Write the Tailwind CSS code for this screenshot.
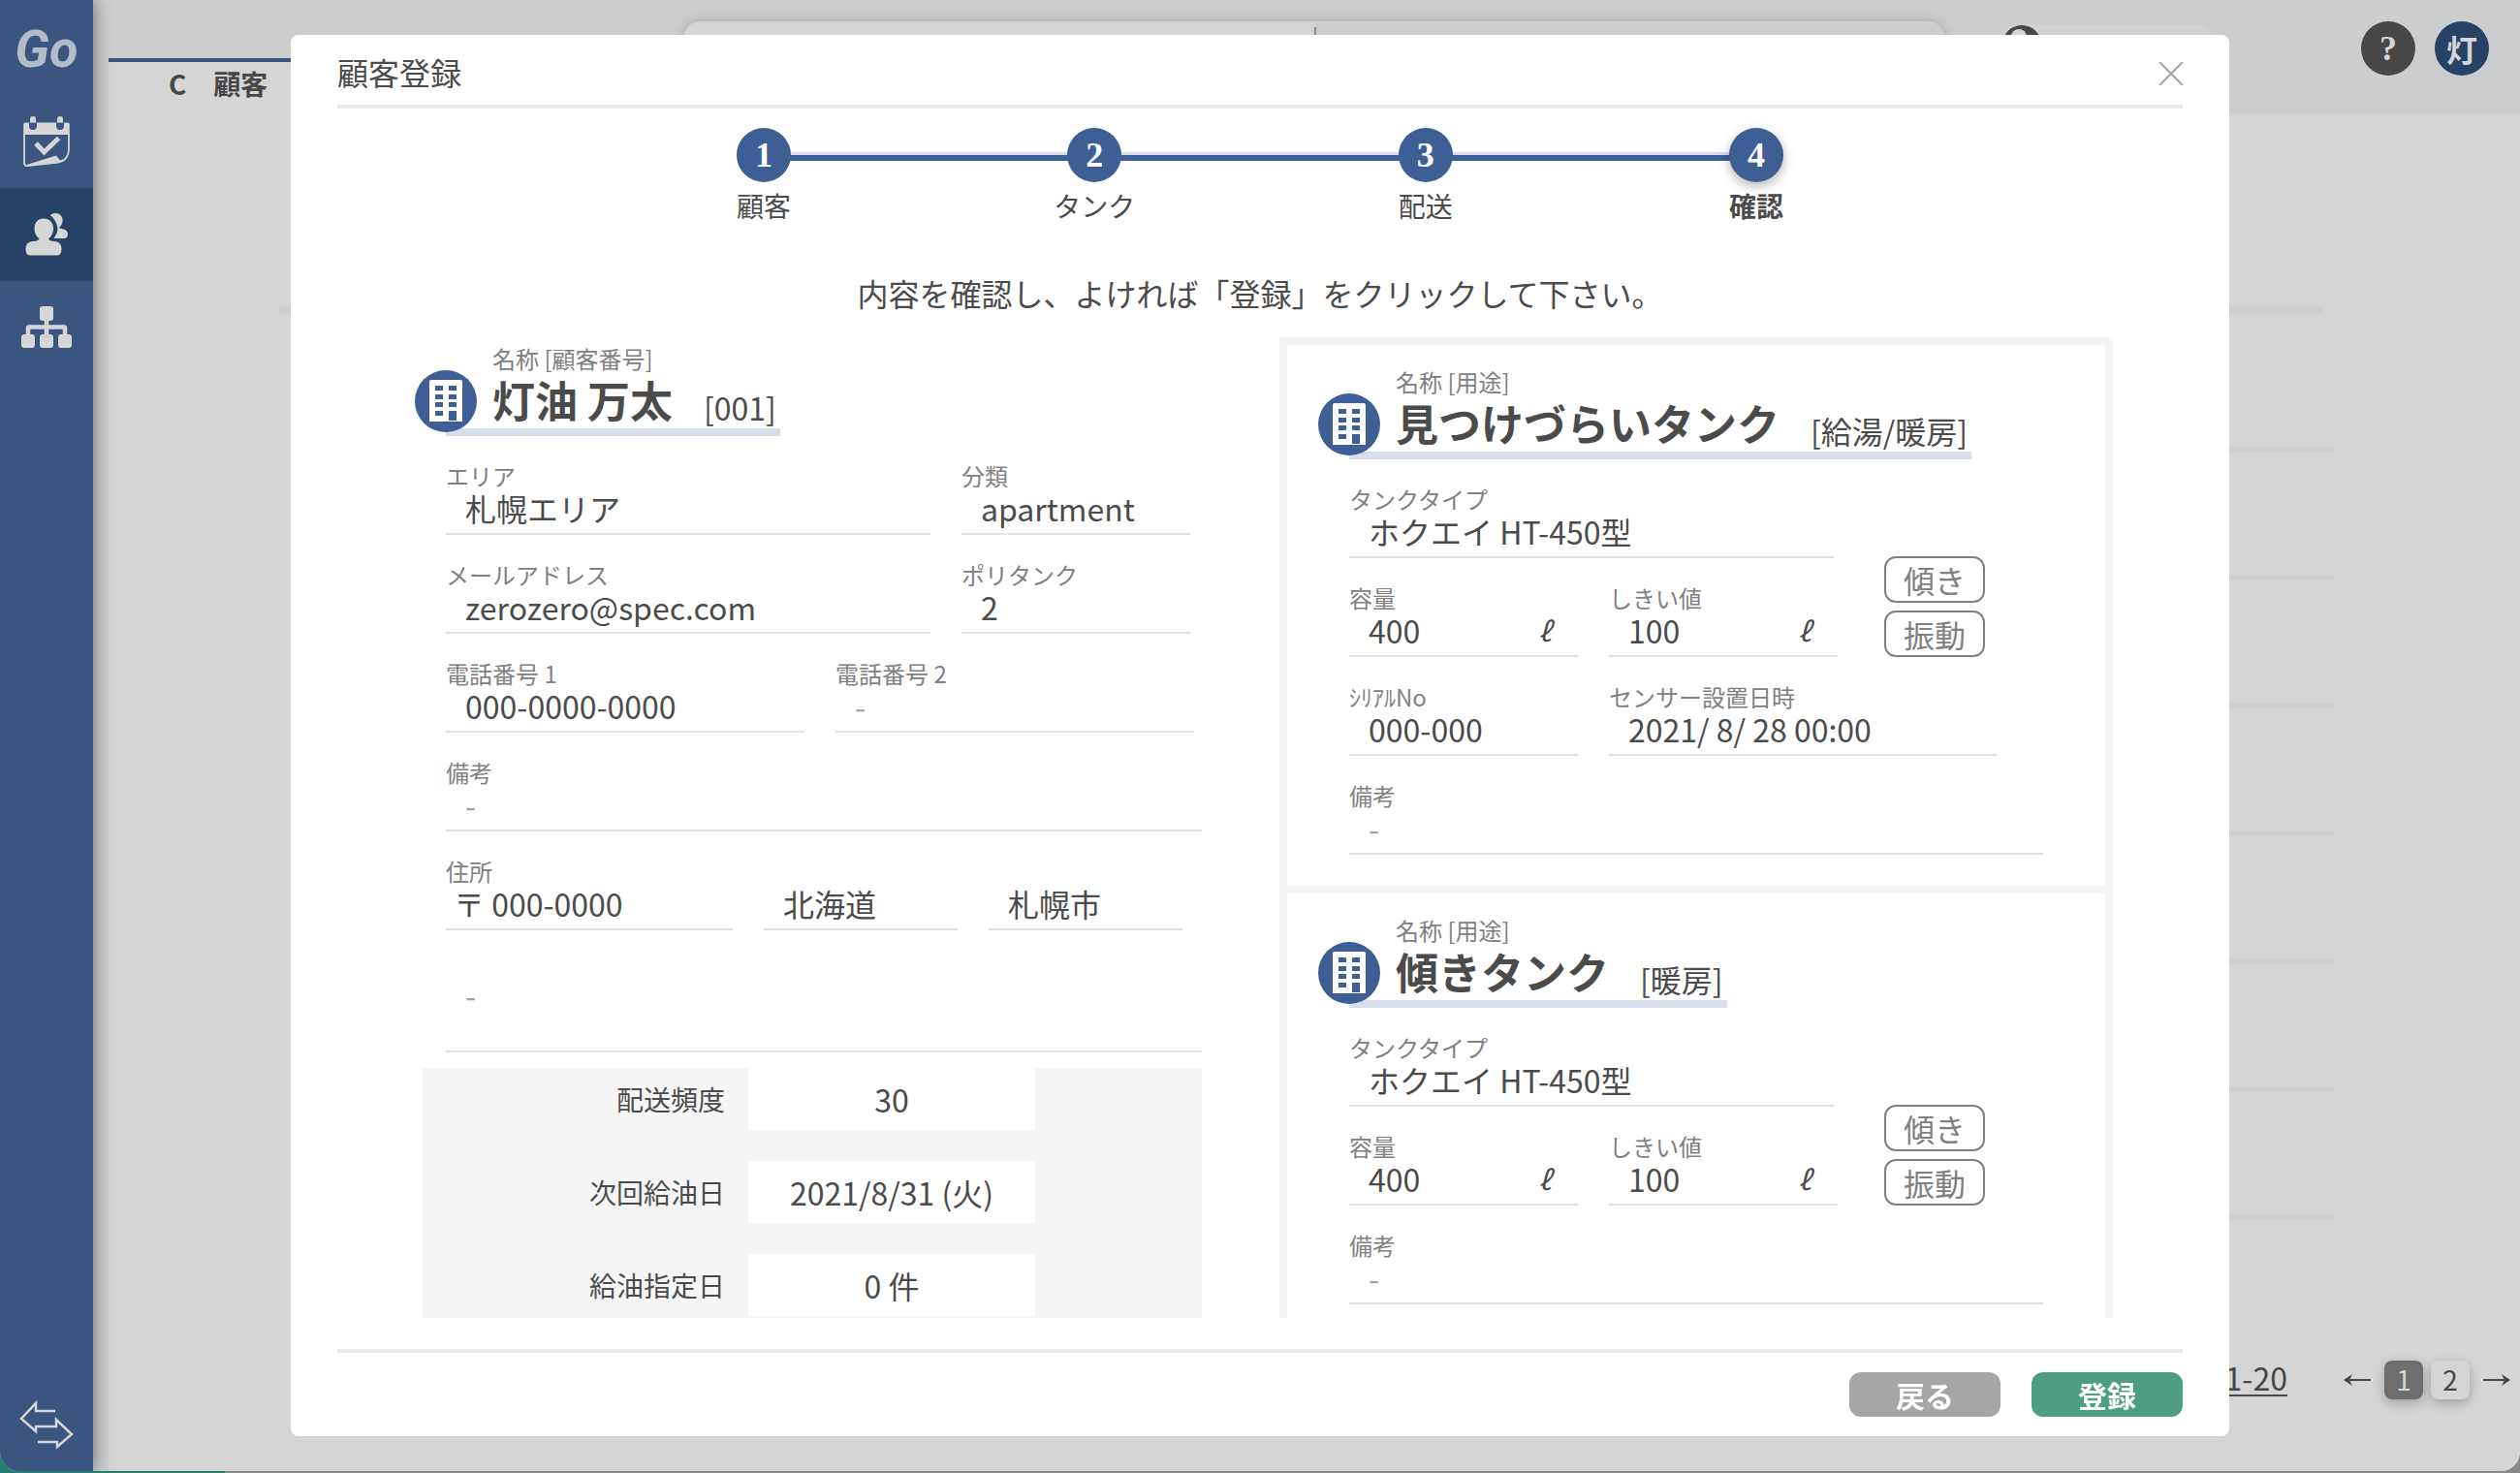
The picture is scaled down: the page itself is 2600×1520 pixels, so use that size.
<!DOCTYPE html>
<html lang="ja">
<head>
<meta charset="utf-8">
<meta name="viewport" content="width=device-width, initial-scale=1">
<title>顧客登録</title>
<script src="https://cdn.jsdelivr.net/npm/@tailwindcss/browser@4"></script>
</head>
<body class="font-['Noto_Sans_CJK_JP',sans-serif] text-[#4b4b4b]">

<svg class="hidden" aria-hidden="true">
  <symbol id="building" viewBox="0 0 64 64">
    <circle cx="32" cy="32" r="32" fill="#3d5f96"/>
    <path d="M17 10h30a2 2 0 0 1 2 2v41H15V12a2 2 0 0 1 2-2z" fill="#fff"/>
    <path d="M21 16h8v5h-8zM35 16h8v5h-8zM21 25h8v5h-8zM35 25h8v5h-8zM21 33h8v5h-8zM35 33h8v5h-8zM21 42h8v5h-8zM35 42h8v10h-8z" fill="#3d5f96"/>
  </symbol>
</svg>

<div class="h-screen bg-[linear-gradient(90deg,#26806f_232px,#8a8a8a_232px)] pb-0.5">
  <div class="flex h-full overflow-hidden rounded-b-[20px] bg-[#cccdcf]">

    <!-- Sidebar -->
    <nav class="relative z-10 flex w-24 shrink-0 flex-col bg-[#3a557f] text-[#d6d6d6] shadow-[2px_0_16px_rgba(0,0,0,0.4)]">
      <a href="#" class="flex h-[98px] items-center justify-center pt-1 font-['Liberation_Sans_Narrow',Roboto,sans-serif] text-[54px] leading-none font-bold text-[#b3bcc9] italic">Go</a>
      <a href="#" aria-label="カレンダー" class="flex h-24 items-center justify-center">
        <svg class="size-14" viewBox="20 118 56 56">
          <path d="M26 126.500h44a1.800 1.800 0 0 1 1.800 1.800V139H24.200v-10.500a2 2 0 0 1 1.800-2z" fill="currentColor"/>
          <path d="M25 138v30.500a2.500 2.500 0 0 0 3 2.500l32-3.500c7-1 11-7 11-13V138" fill="none" stroke="currentColor" stroke-width="1.800"/>
          <path d="M29 169.500l29-9 4 5 5-2-7 4.500-32 3.500z" fill="currentColor"/>
          <path d="M30 126.500h8v3.500a4 4 0 0 1-8 0zM58 126.500h8v3.500a4 4 0 0 1-8 0z" fill="#3a557f"/>
          <path d="M31 126.500V123a3 3 0 0 1 6 0v3.500zM59 126.500V123a3 3 0 0 1 6 0v3.500z" fill="currentColor"/>
          <path d="M37 148l8.500 9 15-14.500" fill="none" stroke="currentColor" stroke-width="5"/>
        </svg>
      </a>
      <a href="#" aria-label="顧客" aria-current="page" class="flex h-24 items-center justify-center bg-[#264266]">
        <svg class="size-14" viewBox="20 214 56 56">
          <path d="M52 222c3-3 9-3 11.500 1.500S64 232 61 235c1 1.500 9 .5 9 6.500 0 3-1.500 4.500-4 4.500H55.500c1-2 2-3 3-5 2-5 1-12-6.500-19z" fill="currentColor"/>
          <path d="M45 225c6 0 10.500 4.500 10.500 11 0 4.500-2 8-5 10.500.5 2 4 1.500 8 2.500 3.500 1 5.500 4 5.500 7.500 0 4-1.500 7.500-5 7.500H31c-3.500 0-5-3.500-5-7.500 0-3.500 2-6.500 5.500-7.500 4-1 8-.5 8.500-2.500-3-2.500-5-6-5-10.500 0-6.500 4-11 10-11z" fill="currentColor" stroke="#264266" stroke-width="1"/>
        </svg>
      </a>
      <a href="#" aria-label="組織" class="flex h-24 items-center justify-center">
        <svg class="size-14" viewBox="20 310 56 56" fill="currentColor">
          <rect x="41" y="316" width="14" height="15" rx="3"/>
          <rect x="22" y="345" width="14" height="14" rx="3"/>
          <rect x="41" y="345" width="14" height="14" rx="3"/>
          <rect x="60" y="345" width="14" height="14" rx="3"/>
          <path d="M48 330v17M29 347v-8.500q0-1 1-1h36q1 0 1 1v8.500" fill="none" stroke="currentColor" stroke-width="4.500"/>
        </svg>
      </a>
      <button type="button" aria-label="切り替え" class="mt-auto mb-5 flex justify-center">
        <svg class="size-14" viewBox="0 0 56 56" fill="none" stroke="currentColor" stroke-width="2.500">
          <path d="M37 14H17V6L2 22l15 13v-5h21v-7l16 15-15 13v-5H19"/>
        </svg>
      </button>
    </nav>

    <!-- Customer list behind the dialog -->
    <main class="relative ml-4 flex min-w-0 flex-1 flex-col bg-[#d5d5d5]">
      <header class="flex h-[118px] shrink-0 items-start bg-[#cccdcf] pt-[22px] pr-8 pl-[594px]">
        <form class="flex h-14 flex-1 overflow-hidden rounded-2xl bg-[#cecece] shadow-[0_0_12px_rgba(0,0,0,0.2)]">
          <input type="text" aria-label="検索" class="mt-0.5 w-1/2 bg-[#d5d5d5]">
          <span class="mt-1.5 w-0.5 bg-[#8c8c8c]"></span>
        </form>
        <button type="button" aria-label="ユーザー検索" class="mt-1 ml-[60px] flex h-12 w-[216px] rounded-xl bg-[#d2d2d2]">
          <svg class="size-10" viewBox="0 0 40 40"><circle cx="20" cy="20" r="20" fill="#474747"/><circle cx="17" cy="12" r="8" fill="#d5d5d5"/></svg>
        </button>
        <div class="ml-[154px] flex gap-5">
          <button type="button" class="size-14 rounded-full bg-[#474747] font-['Liberation_Serif',serif] text-[36px] leading-[56px] font-bold text-[#d6d6d6]">?</button>
          <button type="button" class="size-14 rounded-full bg-[#264266] text-[32px] leading-[54px] font-bold text-[#d6d6d6]">灯</button>
        </div>
      </header>
      <a href="#" class="absolute top-[60px] left-0 w-[400px] border-t-4 border-[#3a557f] bg-[#d5d5d5] pb-4 pl-[62px] text-[28px] leading-[45px] font-bold text-[#474747]">C　顧客</a>
      <div class="mt-[194px] mr-[204px] ml-44 h-4 rounded-lg bg-linear-to-b from-[#d4d4d4] via-[#cccccc] to-[#d4d4d4]"></div>
      <div class="mr-48 ml-56 flex flex-col gap-32 pt-[134px]">
        <div class="h-1 bg-[#cecece]"></div>
        <div class="h-1 bg-[#cecece]"></div>
        <div class="h-1 bg-[#cecece]"></div>
        <div class="h-1 bg-[#cecece]"></div>
        <div class="h-1 bg-[#cecece]"></div>
        <div class="h-1 bg-[#cecece]"></div>
        <div class="h-1 bg-[#cecece]"></div>
      </div>
      <div class="mt-auto mb-[74px] flex items-center justify-end gap-2 pr-2 text-[#474747]">
        <a href="#" class="mr-12 border-b-2 border-[#474747] pb-1 text-[32px] leading-[28px]">1-20</a>
        <a href="#" aria-label="前へ" class="mr-1"><svg class="h-6 w-8" viewBox="0 0 32 24"><path d="M30 12H4" stroke="currentColor" stroke-width="2"/><path d="M2 12l9-6-3 6 3 6z" fill="currentColor"/></svg></a>
        <a href="#" class="size-10 rounded-lg bg-[#6e6e6e] text-center text-[28px] leading-[38px] text-[#d5d5d5] shadow-[0_4px_12px_rgba(0,0,0,0.25)]">1</a>
        <a href="#" class="size-10 rounded-lg bg-[#d5d5d5] text-center text-[28px] leading-[38px] shadow-[0_4px_12px_rgba(0,0,0,0.25)]">2</a>
        <a href="#" aria-label="次へ" class="ml-1"><svg class="h-6 w-8" viewBox="0 0 32 24"><path d="M2 12h26" stroke="currentColor" stroke-width="2"/><path d="M30 12l-9-6 3 6-3 6z" fill="currentColor"/></svg></a>
      </div>
    </main>
  </div>
</div>

<!-- Registration dialog -->
<div class="fixed inset-0 z-20 px-[300px] pt-9 pb-[38px]">
  <section role="dialog" aria-labelledby="dialog-title" class="flex h-full flex-col rounded-lg bg-white px-12">
    <header class="flex h-[76px] shrink-0 items-center justify-between border-b-4 border-[#ebebeb] pt-2">
      <h1 id="dialog-title" class="pb-1 text-[32px] leading-10">顧客登録</h1>
      <button type="button" aria-label="閉じる" class="text-[#a3a3a3]">
        <svg class="size-6" viewBox="0 0 24 24" fill="none" stroke="currentColor" stroke-width="2"><path d="M0 0l24 24M24 0L0 24"/></svg>
      </button>
    </header>

    <ol class="relative mx-auto mt-5 flex w-[1080px] shrink-0 justify-between text-[28px] leading-8">
      <li class="absolute inset-x-7 top-[25px] h-[9px] border-t-[3px] border-[#d7dee9] bg-[#3d5f96]" aria-hidden="true"></li>
      <li class="relative flex w-14 flex-col items-center gap-2 whitespace-nowrap"><span class="size-14 rounded-full bg-[#3d5f96] text-center font-['Liberation_Serif',serif] text-[36px] leading-[56px] font-bold text-white">1</span>顧客</li>
      <li class="relative flex w-14 flex-col items-center gap-2 whitespace-nowrap"><span class="size-14 rounded-full bg-[#3d5f96] text-center font-['Liberation_Serif',serif] text-[36px] leading-[56px] font-bold text-white">2</span>タンク</li>
      <li class="relative flex w-14 flex-col items-center gap-2 whitespace-nowrap"><span class="size-14 rounded-full bg-[#3d5f96] text-center font-['Liberation_Serif',serif] text-[36px] leading-[56px] font-bold text-white">3</span>配送</li>
      <li class="relative flex w-14 flex-col items-center gap-2 font-bold whitespace-nowrap"><span class="size-14 rounded-full bg-[#3d5f96] text-center font-['Liberation_Serif',serif] text-[36px] leading-[56px] font-bold text-white shadow-[0_4px_12px_rgba(0,0,0,0.3)]">4</span>確認</li>
    </ol>

    <p class="mt-[50px] mb-[22px] shrink-0 text-center text-[32px] leading-[48px]">内容を確認し、よければ「登録」をクリックして下さい。</p>

    <div class="grid min-h-0 flex-1 grid-cols-[812fr_860fr] gap-20 overflow-hidden pr-[72px] pl-20">

      <!-- Customer -->
      <section class="pt-2.5">
        <div class="ml-8 flex flex-col gap-[30px]">
          <div class="relative w-fit border-b-8 border-[#d7dee9] pr-1 pl-12">
            <svg class="absolute top-6 -left-8 size-16" aria-hidden="true"><use href="#building"/></svg>
            <p class="text-2xl leading-6 text-[#808080]">名称 [顧客番号]</p>
            <div class="flex h-[60px] items-end gap-8">
              <h2 class="text-[44px] leading-[60px] font-bold">灯油 万太</h2>
              <span class="text-[32px] leading-[44px]">[001]</span>
            </div>
          </div>
          <dl class="flex gap-8">
            <div class="w-[500px] border-b-2 border-[#e3e3e3] pb-1"><dt class="text-2xl leading-[22px] text-[#808080]">エリア</dt><dd class="pl-5 text-[32px] leading-[44px]">札幌エリア</dd></div>
            <div class="w-[236px] border-b-2 border-[#e3e3e3] pb-1"><dt class="text-2xl leading-[22px] text-[#808080]">分類</dt><dd class="pl-5 text-[32px] leading-[44px]">apartment</dd></div>
          </dl>
          <dl class="flex gap-8">
            <div class="w-[500px] border-b-2 border-[#e3e3e3] pb-1"><dt class="text-2xl leading-[22px] text-[#808080]">メールアドレス</dt><dd class="pl-5 text-[32px] leading-[44px]">zerozero@spec.com</dd></div>
            <div class="w-[236px] border-b-2 border-[#e3e3e3] pb-1"><dt class="text-2xl leading-[22px] text-[#808080]">ポリタンク</dt><dd class="pl-5 text-[32px] leading-[44px]">2</dd></div>
          </dl>
          <dl class="flex gap-8">
            <div class="w-[370px] border-b-2 border-[#e3e3e3] pb-1"><dt class="text-2xl leading-[22px] text-[#808080]">電話番号 1</dt><dd class="pl-5 text-[32px] leading-[44px]">000-0000-0000</dd></div>
            <div class="w-[370px] border-b-2 border-[#e3e3e3] pb-1"><dt class="text-2xl leading-[22px] text-[#808080]">電話番号 2</dt><dd class="pl-5 text-[32px] leading-[44px] text-[#a0a0a8]">-</dd></div>
          </dl>
          <dl class="border-b-2 border-[#e3e3e3] pb-1"><dt class="text-2xl leading-[22px] text-[#808080]">備考</dt><dd class="pl-5 text-[32px] leading-[44px] text-[#a0a0a8]">-</dd></dl>
          <div class="text-[32px] leading-[44px]">
            <p class="text-2xl leading-[22px] text-[#808080]">住所</p>
            <div class="flex gap-8">
              <span class="w-[296px] border-b-2 border-[#e3e3e3] pb-1 pl-2">〒 000-0000</span>
              <span class="w-[200px] border-b-2 border-[#e3e3e3] pb-1 pl-5">北海道</span>
              <span class="w-[200px] border-b-2 border-[#e3e3e3] pb-1 pl-5">札幌市</span>
            </div>
            <p class="border-b-2 border-[#e3e3e3] pt-11 pb-9 pl-5 text-[#a0a0a8]">-</p>
          </div>
        </div>
        <dl class="mt-4 ml-2 grid grid-cols-[336fr_296fr_172fr] gap-y-8 bg-[#f5f5f5] pb-2 leading-[64px]">
          <dt class="pr-6 text-right text-[28px]">配送頻度</dt><dd class="bg-white text-center text-[32px]">30</dd>
          <dt class="col-start-1 pr-6 text-right text-[28px]">次回給油日</dt><dd class="bg-white text-center text-[32px]">2021/8/31 (火)</dd>
          <dt class="col-start-1 pr-6 text-right text-[28px]">給油指定日</dt><dd class="bg-white text-center text-[32px]">0 件</dd>
        </dl>
      </section>

      <!-- Tanks -->
      <section class="divide-y-8 divide-[#f5f5f5] border-8 border-b-0 border-[#f5f5f5]">
        <article class="flex flex-col gap-[30px] pt-[26px] pb-8 pl-16">
          <div class="relative w-fit border-b-8 border-[#d7dee9] pr-1 pl-12">
            <svg class="absolute top-6 -left-8 size-16" aria-hidden="true"><use href="#building"/></svg>
            <p class="text-2xl leading-6 text-[#808080]">名称 [用途]</p>
            <div class="flex h-[60px] items-end gap-8">
              <h2 class="text-[44px] leading-[60px] font-bold">見つけづらいタンク</h2>
              <span class="text-[32px] leading-[44px]">[給湯/暖房]</span>
            </div>
          </div>
          <div class="flex items-end gap-12">
            <dl class="grid grid-cols-[236px_236px] gap-x-8 gap-y-[30px]">
              <div class="col-span-2 w-[500px] border-b-2 border-[#e3e3e3] pb-1"><dt class="text-2xl leading-[22px] text-[#808080]">タンクタイプ</dt><dd class="pl-5 text-[32px] leading-[44px]">ホクエイ HT-450型</dd></div>
              <div class="border-b-2 border-[#e3e3e3] pb-1"><dt class="text-2xl leading-[22px] text-[#808080]">容量</dt><dd class="flex justify-between pr-7 pl-5 text-[32px] leading-[44px]">400<span class="text-[28px] italic">ℓ</span></dd></div>
              <div class="border-b-2 border-[#e3e3e3] pb-1"><dt class="text-2xl leading-[22px] text-[#808080]">しきい値</dt><dd class="flex justify-between pr-7 pl-5 text-[32px] leading-[44px]">100<span class="text-[28px] italic">ℓ</span></dd></div>
            </dl>
            <div class="flex flex-col gap-2 text-center text-[32px] leading-[44px] text-[#808080]">
              <span class="w-[104px] rounded-xl border-2 border-[#808080]">傾き</span>
              <span class="w-[104px] rounded-xl border-2 border-[#808080]">振動</span>
            </div>
          </div>
          <dl class="flex gap-8">
            <div class="w-[236px] border-b-2 border-[#e3e3e3] pb-1"><dt class="text-2xl leading-[22px] text-[#808080]">ｼﾘｱﾙNo</dt><dd class="pl-5 text-[32px] leading-[44px]">000-000</dd></div>
            <div class="w-[400px] border-b-2 border-[#e3e3e3] pb-1"><dt class="text-2xl leading-[22px] text-[#808080]">センサー設置日時</dt><dd class="pl-5 text-[32px] leading-[44px]">2021/ 8/ 28 00:00</dd></div>
          </dl>
          <dl class="mr-16 border-b-2 border-[#e3e3e3] pb-1"><dt class="text-2xl leading-[22px] text-[#808080]">備考</dt><dd class="pl-5 text-[32px] leading-[44px] text-[#a0a0a8]">-</dd></dl>
        </article>

        <article class="flex flex-col gap-[30px] pt-[26px] pb-8 pl-16">
          <div class="relative w-fit border-b-8 border-[#d7dee9] pr-1 pl-12">
            <svg class="absolute top-6 -left-8 size-16" aria-hidden="true"><use href="#building"/></svg>
            <p class="text-2xl leading-6 text-[#808080]">名称 [用途]</p>
            <div class="flex h-[60px] items-end gap-8">
              <h2 class="text-[44px] leading-[60px] font-bold">傾きタンク</h2>
              <span class="text-[32px] leading-[44px]">[暖房]</span>
            </div>
          </div>
          <div class="flex items-end gap-12">
            <dl class="grid grid-cols-[236px_236px] gap-x-8 gap-y-[30px]">
              <div class="col-span-2 w-[500px] border-b-2 border-[#e3e3e3] pb-1"><dt class="text-2xl leading-[22px] text-[#808080]">タンクタイプ</dt><dd class="pl-5 text-[32px] leading-[44px]">ホクエイ HT-450型</dd></div>
              <div class="border-b-2 border-[#e3e3e3] pb-1"><dt class="text-2xl leading-[22px] text-[#808080]">容量</dt><dd class="flex justify-between pr-7 pl-5 text-[32px] leading-[44px]">400<span class="text-[28px] italic">ℓ</span></dd></div>
              <div class="border-b-2 border-[#e3e3e3] pb-1"><dt class="text-2xl leading-[22px] text-[#808080]">しきい値</dt><dd class="flex justify-between pr-7 pl-5 text-[32px] leading-[44px]">100<span class="text-[28px] italic">ℓ</span></dd></div>
            </dl>
            <div class="flex flex-col gap-2 text-center text-[32px] leading-[44px] text-[#808080]">
              <span class="w-[104px] rounded-xl border-2 border-[#808080]">傾き</span>
              <span class="w-[104px] rounded-xl border-2 border-[#808080]">振動</span>
            </div>
          </div>
          <dl class="mr-16 border-b-2 border-[#e3e3e3] pb-1"><dt class="text-2xl leading-[22px] text-[#808080]">備考</dt><dd class="pl-5 text-[32px] leading-[44px] text-[#a0a0a8]">-</dd></dl>
        </article>
      </section>
    </div>

    <footer class="mt-8 flex shrink-0 justify-end gap-8 border-t-4 border-[#ebebeb] py-5 text-[30px] leading-[46px] font-bold text-white">
      <button type="button" class="w-[156px] rounded-xl bg-[#a6a6a6]">戻る</button>
      <button type="submit" class="w-[156px] rounded-xl bg-[#4e9d85]">登録</button>
    </footer>
  </section>
</div>
</body>
</html>
